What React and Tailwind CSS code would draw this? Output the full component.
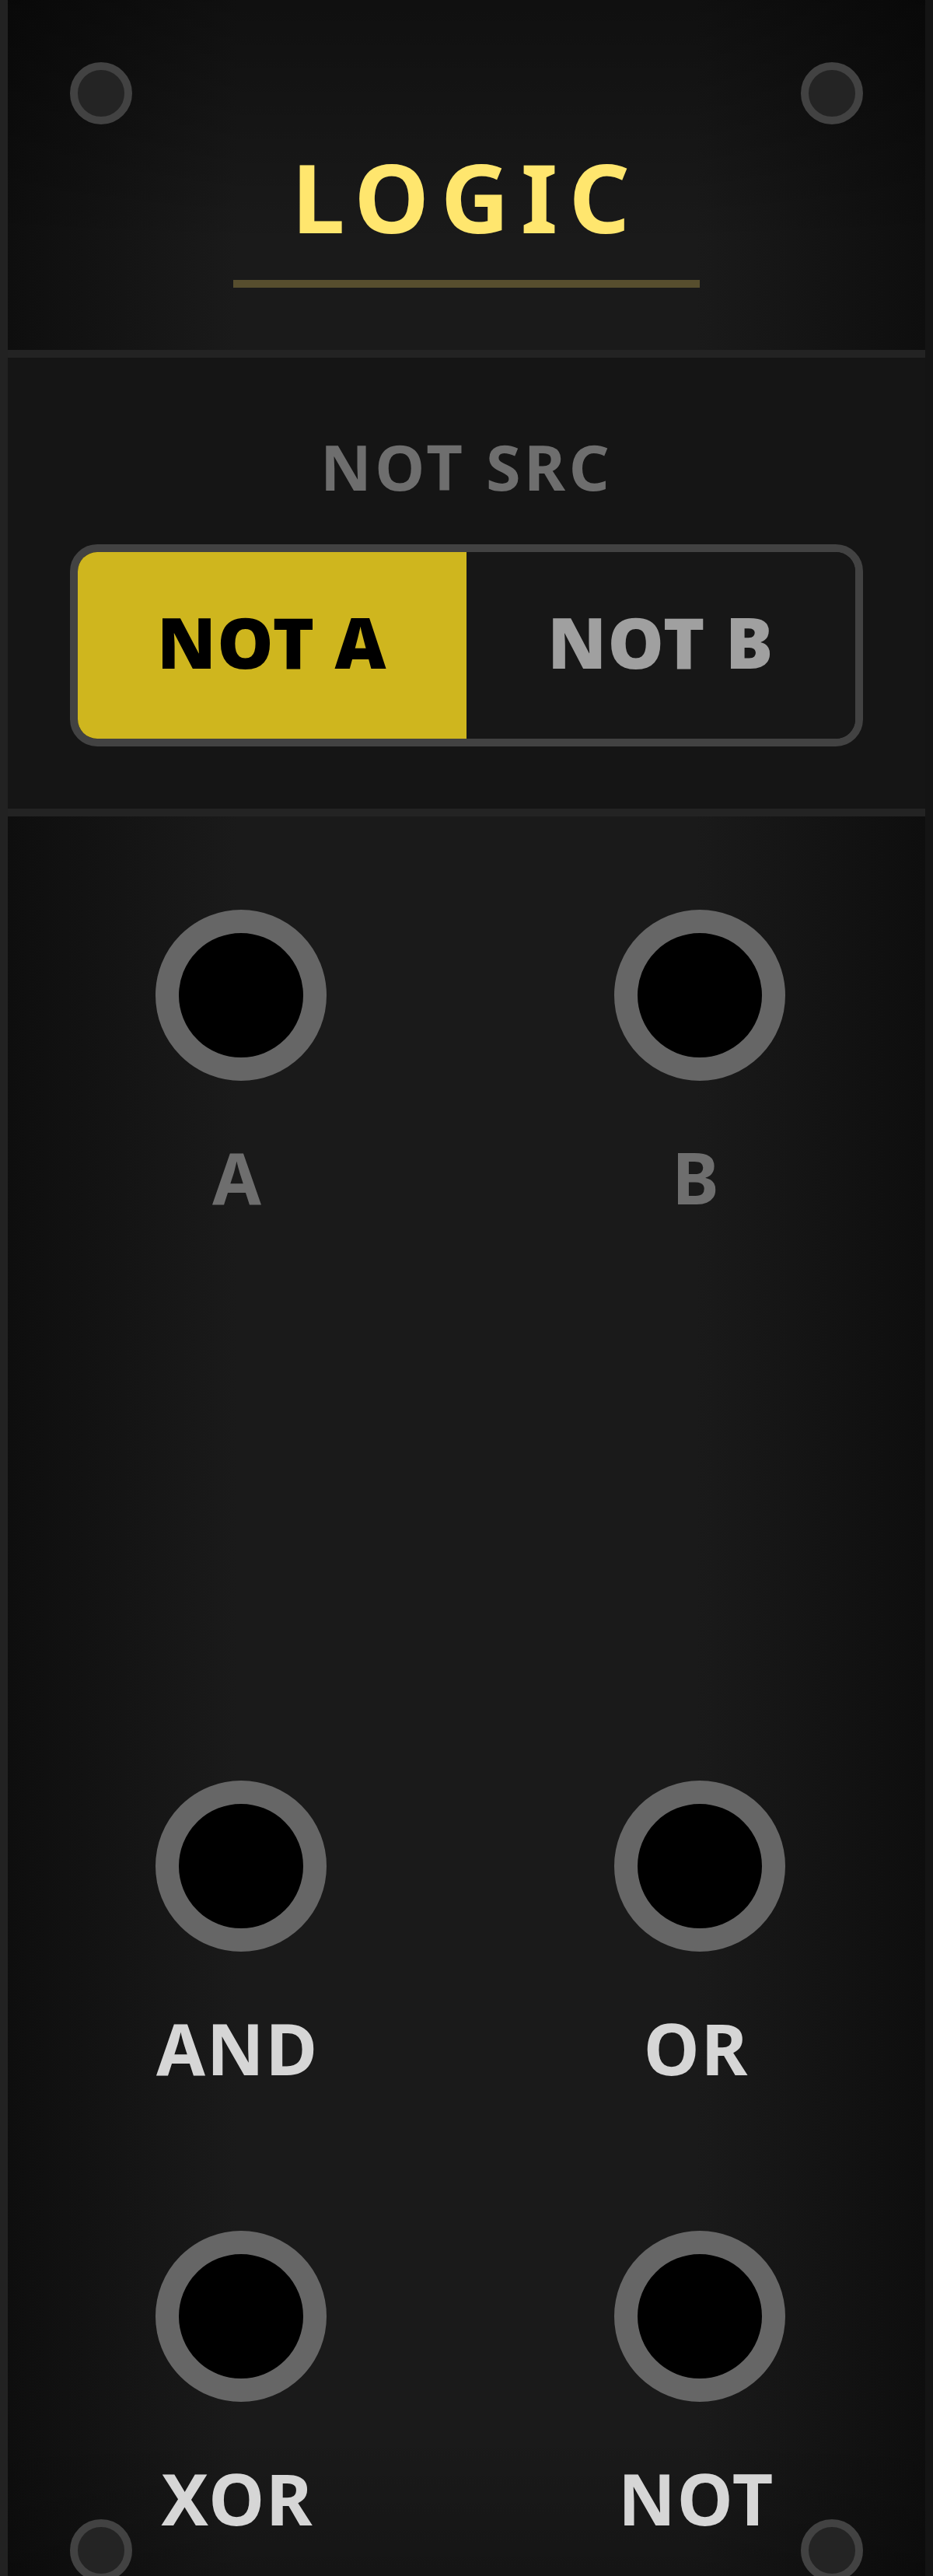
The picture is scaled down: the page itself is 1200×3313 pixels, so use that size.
import React from "react";

const Screw = ({ className }) => (
  <div
    className={`absolute w-[80px] h-[80px] rounded-full border-[10px] border-[#424242] bg-[#242424] ${className}`}
  />
);

const Jack = ({ label, dim }) => (
  <div className="flex flex-col items-center">
    <div className="w-[220px] h-[220px] rounded-full border-[30px] border-[#666666] bg-black" />
    <div
      className={`mt-[79px] pr-[9px] text-[91px] leading-none font-bold tracking-[0.02em] ${
        dim ? "text-[#6e6e6e]" : "text-[#d6d6d6]"
      }`}
    >
      {label}
    </div>
  </div>
);

export default function App() {
  return (
    <div className="relative flex w-[1200px] h-[3313px] overflow-hidden bg-[#141414] font-['Noto_Sans',sans-serif]">
      <div className="w-[10px] shrink-0 bg-[#222222]" />

      <div className="relative flex w-[1180px] flex-col bg-[linear-gradient(to_right,#0e0e0e_0%,#1a1a1a_25%,#1a1a1a_75%,#0e0e0e_100%)]">
        <Screw className="left-[80px] top-[80px]" />
        <Screw className="right-[80px] top-[80px]" />
        <Screw className="left-[80px] top-[3240px]" />
        <Screw className="right-[80px] top-[3240px]" />

        {/* header */}
        <div className="h-[450px] flex flex-col items-center pt-[192px] bg-[linear-gradient(to_bottom,rgba(0,0,0,0.4),rgba(0,0,0,0)_70%)]">
          <h1 className="text-[122px] leading-none font-bold tracking-[0.12em] text-[#ffe66e]">
            LOGIC
          </h1>
          <div className="mt-[46px] w-[600px] h-[10px] bg-[#574e2e]" />
        </div>

        <div className="h-[10px] bg-[#232323]" />

        {/* NOT source switch */}
        <div className="h-[580px] flex flex-col items-center pt-[99px] bg-[#151515]">
          <div className="text-[81px] leading-none font-bold tracking-[0.055em] text-[#6e6e6e]">
            NOT SRC
          </div>
          <div className="mt-[60px] flex w-[1020px] h-[260px] rounded-[35px] border-[10px] border-[#424242] overflow-hidden">
            <button className="flex w-1/2 items-center justify-center pb-[10px] bg-[#cfb61e] text-black text-[91px] leading-none font-black tracking-[0.015em]">
              NOT A
            </button>
            <button className="flex w-1/2 items-center justify-center pb-[10px] bg-[#171717] text-[#a0a0a0] text-[91px] leading-none font-black tracking-[0.015em]">
              NOT B
            </button>
          </div>
        </div>

        <div className="h-[10px] bg-[#232323]" />

        {/* jacks */}
        <div className="flex-1 pt-[120px] pl-[10px] bg-[linear-gradient(to_top,rgba(0,0,0,0.2),rgba(0,0,0,0)_8%)]">
          <div className="grid grid-cols-[580px_580px] gap-x-[10px]">
            <Jack label="A" dim />
            <Jack label="B" dim />
          </div>
          <div className="h-[730px]" />
          <div className="grid grid-cols-[580px_580px] gap-x-[10px] gap-y-[189px]">
            <Jack label="AND" />
            <Jack label="OR" />
            <Jack label="XOR" />
            <Jack label="NOT" />
          </div>
        </div>
      </div>

      <div className="w-[10px] shrink-0 bg-[#141414]" />
    </div>
  );
}
